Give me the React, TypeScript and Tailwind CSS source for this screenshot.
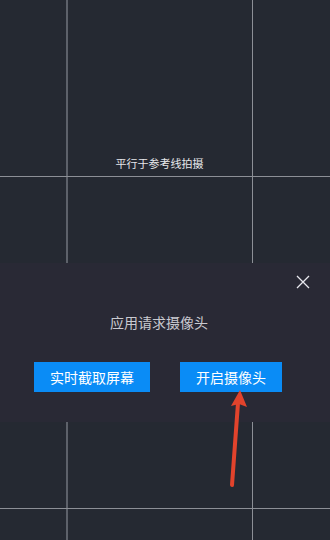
import React from "react";

export default function App() {
  const font = { fontFamily: '"Noto Sans CJK SC", "Noto Sans", sans-serif' };
  return (
    <div className="relative w-[330px] h-[540px] overflow-hidden bg-[#252932]" style={font}>
      {/* viewfinder grid */}
      <div className="absolute left-[66px] top-0 h-full w-[2px] bg-[#5d616a]" />
      <div className="absolute left-[252px] top-0 h-full w-px bg-[#8c8f96]" />
      <div className="absolute left-0 top-[176px] w-full h-px bg-[#8c8f96]" />
      <div className="absolute left-0 top-[508px] w-full h-px bg-[#8c8f96]" />

      <div className="relative flex flex-col h-full">
        <div className="h-[263px] flex flex-col items-center pt-[155px] pr-[11px]">
          <span className="text-[11px] leading-[16px] text-[#e6e7ea]">平行于参考线拍摄</span>
        </div>

        <div className="relative h-[159px] bg-[#292935] flex flex-col items-center">
          <button className="absolute right-[20px] top-[12px] w-[14px] h-[14px]">
            <svg viewBox="0 0 14 14" width="14" height="14">
              <path d="M1 1 L13 13 M13 1 L1 13" stroke="#e8e8ee" strokeWidth="1.3" fill="none" />
            </svg>
          </button>
          <div className="mt-[49px] mr-[12px] text-[14px] leading-[20px] text-[#c9cad0]">应用请求摄像头</div>
          <div className="mt-[30px] flex gap-[30px] w-full pl-[34px]">
            <div className="w-[116px] h-[30px] bg-[#0a8cf6] flex items-center justify-center text-[14px] text-white">
              实时截取屏幕
            </div>
            <div className="w-[102px] h-[30px] bg-[#0a8cf6] flex items-center justify-center text-[14px] text-white">
              开启摄像头
            </div>
          </div>
        </div>
      </div>

      {/* annotation arrow */}
      <svg className="absolute left-0 top-0" width="330" height="540" viewBox="0 0 330 540">
        <line x1="232" y1="485" x2="238" y2="403" stroke="#e2432c" strokeWidth="4" strokeLinecap="round" />
        <polygon points="240,390 247,407 239,404 231,406" fill="#e2432c" />
      </svg>
    </div>
  );
}
